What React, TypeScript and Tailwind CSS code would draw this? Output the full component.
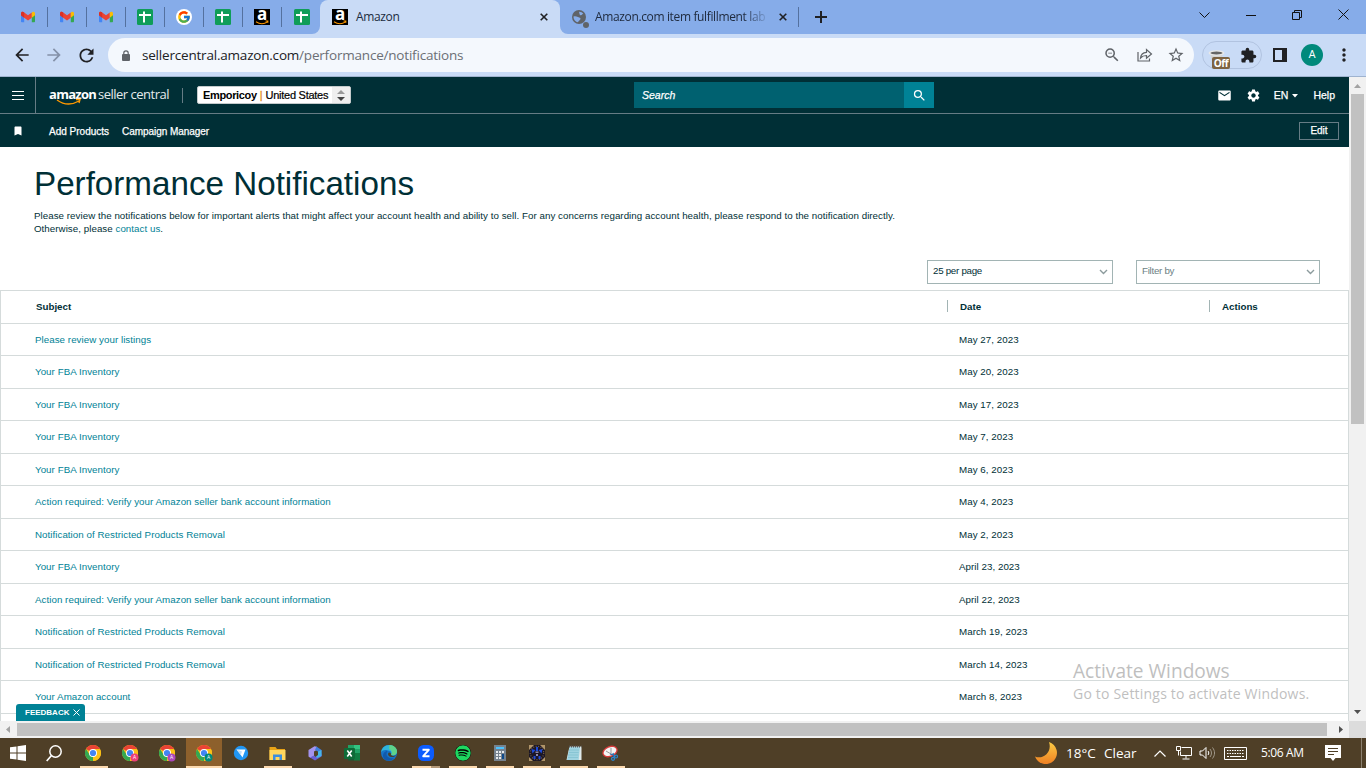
import { ReactNode } from 'react';
import { FcGoogle } from 'react-icons/fc';
import { FaSpotify } from 'react-icons/fa';
import {
  MdArrowBack,
  MdArrowForward,
  MdBookmark,
  MdEmail,
  MdExtension,
  MdMoreVert,
  MdOutlineZoomOut,
  MdRefresh,
  MdSearch,
  MdSettings,
  MdStarBorder,
} from 'react-icons/md';

const notifications = [
  { subject: 'Please review your listings', date: 'May 27, 2023' },
  { subject: 'Your FBA Inventory', date: 'May 20, 2023' },
  { subject: 'Your FBA Inventory', date: 'May 17, 2023' },
  { subject: 'Your FBA Inventory', date: 'May 7, 2023' },
  { subject: 'Your FBA Inventory', date: 'May 6, 2023' },
  { subject: 'Action required: Verify your Amazon seller bank account information', date: 'May 4, 2023' },
  { subject: 'Notification of Restricted Products Removal', date: 'May 2, 2023' },
  { subject: 'Your FBA Inventory', date: 'April 23, 2023' },
  { subject: 'Action required: Verify your Amazon seller bank account information', date: 'April 22, 2023' },
  { subject: 'Notification of Restricted Products Removal', date: 'March 19, 2023' },
  { subject: 'Notification of Restricted Products Removal', date: 'March 14, 2023' },
  { subject: 'Your Amazon account', date: 'March 8, 2023' },
];

function GmailIcon() {
  return (
    <svg width="16" height="16" viewBox="0 0 16 16">
      <path d="M1 5v7.2c0 .6.4 1 1 1h2.2V6.5z" fill="#4285f4" />
      <path d="M15 5v7.2c0 .6-.4 1-1 1h-2.2V6.5z" fill="#34a853" />
      <path d="M1 4.4c0-1.7 1.8-2.1 3.2-1L8 6.3l3.8-2.9v5.3L8 11.4 4.2 8.7 1 6.2z" fill="#ea4335" />
      <path d="M11.8 3.4C13.2 2.3 15 2.8 15 4.4v1.8l-3.2 2.5z" fill="#fbbc04" />
      <path d="M1 4.4c0-1.7 1.8-2.1 3.2-1v5.3L1 6.2z" fill="#d93025" />
    </svg>
  );
}

function SheetsIcon() {
  return (
    <svg width="16" height="16" viewBox="0 0 16 16">
      <rect width="16" height="16" rx="1.5" fill="#0f9d58" />
      <path d="M2 6h12M7 2.500v11" stroke="#fff" strokeWidth="2" />
    </svg>
  );
}

function AmazonIcon() {
  return (
    <span className="relative flex h-4 w-4 justify-center bg-black font-['Open_Sans',sans-serif] text-[17px] leading-[9px] font-bold text-white">
      a
      <svg className="absolute inset-0" width="16" height="16" viewBox="0 0 16 16">
        <path d="M2 12.700c3.500 2.400 8 2.500 11.500.2M11.500 12h2.300v1.800" stroke="#f90" strokeWidth="1.100" fill="none" />
      </svg>
    </span>
  );
}

function GoogleIcon() {
  return (
    <span className="flex h-4 w-4 items-center justify-center rounded-full bg-white">
      <FcGoogle size={14} />
    </span>
  );
}

function GlobeIcon() {
  return (
    <svg width="14" height="14" viewBox="0 0 14 14">
      <circle cx="7" cy="7" r="7" fill="#5f6368" />
      <path d="M7 1.700c2 0 3.500.8 4.300 2-1 .3-1.300 1.300-2.500 1.500S7.500 3.500 7 1.700z" fill="#86ace9" />
      <path d="M1.500 6.500c1.500-.5 3-.2 4.500.5s2.800.7 2.500 2-2 1.500-2.500 3.300C3.500 12 1.500 9.500 1.500 6.500z" fill="#86ace9" />
    </svg>
  );
}

function CloseIcon() {
  return (
    <svg width="8" height="8" viewBox="0 0 8 8">
      <path d="M.7.7l6.600 6.600M7.300.7.7 7.300" stroke="#202124" strokeWidth="1.600" />
    </svg>
  );
}

function TabStrip() {
  const pinned = [GmailIcon, GmailIcon, GmailIcon, SheetsIcon, GoogleIcon, SheetsIcon, AmazonIcon, SheetsIcon];
  return (
    <div className="flex h-[34px] bg-[#86ace9] font-['Open_Sans','Noto_Sans',sans-serif] text-xs tracking-[-0.36px] text-[#202c40]">
      <div className="flex h-full w-[312px] items-center pl-[9px]">
        {pinned.map((Icon, i) => (
          <div
            key={i}
            className={`flex h-5 w-[39px] shrink-0 items-center justify-center ${i < 7 ? 'border-r border-[#54719f]' : ''}`}
          >
            <Icon />
          </div>
        ))}
      </div>
      <svg className="shrink-0 self-end" width="8" height="8" viewBox="0 0 8 8">
        <path d="M8 0v8H0a8 8 0 0 0 8-8z" fill="#c9dbf6" />
      </svg>
      <div className="flex w-60 shrink-0 items-center rounded-t-lg bg-[#c9dbf6] pl-3">
        <AmazonIcon />
        <span className="ml-2 w-[184px]">Amazon</span>
        <CloseIcon />
      </div>
      <svg className="shrink-0 self-end" width="8" height="8" viewBox="0 0 8 8">
        <path d="M0 0v8h8a8 8 0 0 1-8-8z" fill="#c9dbf6" />
      </svg>
      <div className="flex h-full w-[231px] shrink-0 items-center">
        <div className="relative ml-1 h-4 w-[17px] pt-px">
          <GlobeIcon />
          <span className="absolute right-0 -bottom-[3px] h-1.5 w-1.5 rounded-full bg-[#5f6368]" />
        </div>
        <span className="ml-[6px] w-[171px] whitespace-nowrap [mask-image:linear-gradient(to_right,#000_87%,transparent_102%)]">
          Amazon.com item fulfillment lab
        </span>
        <span className="ml-[13px]">
          <CloseIcon />
        </span>
      </div>
      <div className="flex items-center">
        <span className="-ml-px h-5 w-px bg-[#54719f]" />
        <svg className="ml-4" width="12" height="12" viewBox="0 0 12 12">
          <path d="M6 0v12M0 6h12" stroke="#202124" strokeWidth="2" />
        </svg>
      </div>
      <div className="ml-auto flex h-[29px] items-center gap-[36px] pr-[17px]">
        <svg width="11" height="6" viewBox="0 0 11 6">
          <path d="M.5.5l5 5 5-5" stroke="#111" fill="none" />
        </svg>
        <svg width="10" height="10" viewBox="0 0 10 10">
          <path d="M0 5.500h10" stroke="#111" />
        </svg>
        <svg width="10" height="10" viewBox="0 0 10 10">
          <path d="M.5 2.500h7v7h-7zM2.500 2.500v-2h7v7h-2" stroke="#111" fill="none" />
        </svg>
        <svg width="11" height="11" viewBox="0 0 11 11">
          <path d="M.5.5l10 10M10.500.5l-10 10" stroke="#111" />
        </svg>
      </div>
    </div>
  );
}

function LockIcon() {
  return (
    <svg width="8" height="11" viewBox="0 0 8 11">
      <rect y="4" width="8" height="7" rx="1" fill="#5f6368" />
      <path d="M1.800 4.500V3a2.200 2.200 0 0 1 4.400 0v1.500" stroke="#5f6368" strokeWidth="1.200" fill="none" />
    </svg>
  );
}

function ShareIcon() {
  return (
    <svg width="16" height="14" viewBox="0 0 16 14" fill="none" stroke="#5f6368" strokeWidth="1.200">
      <path d="M1 4v9h11.500v-2.500" />
      <path d="M3.500 10c.3-3.500 2.300-5.500 6-5.700V1.500L14.500 6l-5 4.300V7.500C7 7.500 5 8.200 3.500 10z" />
    </svg>
  );
}

function Toolbar() {
  return (
    <div className="flex h-[43px] items-center border-b border-[#9fb3cf] bg-[#c9dbf6] pl-3 text-[#202124]">
      <MdArrowBack size={20} />
      <MdArrowForward size={20} className="ml-3 text-[#8491a8]" />
      <MdRefresh size={21} className="ml-[12px]" />
      <div className="ml-[11px] flex h-[34px] w-[1086px] shrink-0 items-center rounded-full bg-[#f4f8fd] pl-[14px] text-[#5f6368]">
        <LockIcon />
        <span className="ml-3 w-[961px] font-['Open_Sans','Noto_Sans',sans-serif] text-[13.5px] tracking-[-0.2px] text-[#6b6f75]">
          <span className="text-[#202124]">sellercentral.amazon.com</span>/performance/notifications
        </span>
        <MdOutlineZoomOut size={18} className="shrink-0" />
        <span className="ml-4 shrink-0">
          <ShareIcon />
        </span>
        <MdStarBorder size={18} className="ml-[14px] shrink-0" />
      </div>
      <div className="ml-2 flex h-7 w-[60px] shrink-0 items-center rounded-full border border-[#b1c3e0] pl-[5px]">
        <div className="relative h-4 w-[23px] pt-[3px]">
          <svg width="17" height="14" viewBox="0 0 17 14">
            <path d="M2 3h13l-2 9H4z" fill="#d5d5d5" />
            <ellipse cx="8.500" cy="3" rx="8" ry="2.800" fill="#e8e8e8" />
            <ellipse cx="8.500" cy="3" rx="6" ry="1.500" fill="#666" />
          </svg>
          <span className="absolute top-[10px] left-[4px] flex h-3 w-[18px] items-center justify-center rounded-[2px] bg-[#7d6342] font-['Open_Sans',sans-serif] text-[10px] font-bold tracking-[-0.4px] text-white">
            Off
          </span>
        </div>
        <MdExtension size={17} className="ml-[9px]" />
      </div>
      <svg className="ml-[11px] shrink-0" width="14" height="14" viewBox="0 0 14 14">
        <path d="M1 1h12v12H1z" stroke="#202124" strokeWidth="2" fill="none" />
        <path d="M9 0h5v14H9z" fill="#202124" />
      </svg>
      <span className="ml-[14px] flex h-[22px] w-[22px] shrink-0 items-center justify-center rounded-full bg-[#00897b] font-['Roboto',sans-serif] text-[11px] text-white">
        A
      </span>
      <MdMoreVert size={20} className="ml-[11px] shrink-0" />
    </div>
  );
}

function SellerHeader() {
  return (
    <header className="bg-[#002f36] text-white">
      <div className="flex h-[37px] items-center border-b border-[#667c85]">
        <div className="flex h-full w-9 items-center border-r border-[#667c85] pl-3">
          <svg width="12" height="9" viewBox="0 0 12 9">
            <path d="M0 .5h12M0 4.500h12M0 8.500h12" stroke="#fff" />
          </svg>
        </div>
        <div className="relative ml-[13px] h-6 w-[121px] font-['Open_Sans',sans-serif] text-[13px] leading-[23px] whitespace-nowrap">
          <span className="inline-block w-[49px] font-bold tracking-[-0.7px]">amazon</span>
          <span className="tracking-[-0.5px] text-[#e5eaeb]">seller central</span>
          <svg className="absolute top-[15px] left-[7px]" width="26" height="8" viewBox="0 0 26 8">
            <path d="M1 2c7 5 15 5 22 1M20 1.500h4l-1 3.500" stroke="#f90" strokeWidth="1.400" fill="none" />
          </svg>
        </div>
        <span className="ml-3 h-[15px] w-px bg-[#667c85]" />
        <div className="ml-[14px] flex h-[18px] w-[154px] items-center rounded-[2px] border border-[#c4cbcc] bg-white pl-[5px] text-[11px] whitespace-nowrap text-black">
          <b className="tracking-[-0.35px]">Emporicoy</b>
          <span className="mx-[3px] text-[#e08a1e] [-webkit-text-stroke:0.3px]">|</span>
          <span className="tracking-[-0.26px] [-webkit-text-stroke:0.2px]">United States</span>
          <span className="ml-auto flex h-full w-[18px] items-center justify-center bg-[#efefef]">
            <svg width="8" height="11" viewBox="0 0 8 11">
              <path d="M4 0l4 4H0z" fill="#999" />
              <path d="M4 11l4-4H0z" fill="#444" />
            </svg>
          </span>
        </div>
        <div className="ml-[283px] flex h-[26px] w-[300px] items-center bg-[#006170] pl-2 text-[10.5px] italic">
          <span className="pt-[2px] [-webkit-text-stroke:0.25px]">Search</span>
          <span className="ml-auto flex h-full w-[30px] items-center justify-center bg-[#008296]">
            <MdSearch size={15} />
          </span>
        </div>
        <div className="ml-auto flex items-center pr-[14px] text-[10.5px] [-webkit-text-stroke:0.25px]">
          <MdEmail size={15} />
          <MdSettings size={15} className="ml-[14px]" />
          <span className="ml-[13px] pt-[2px]">EN</span>
          <svg className="mt-px ml-1" width="6" height="4" viewBox="0 0 6 4">
            <path d="M0 0h6L3 3.500z" fill="#fff" />
          </svg>
          <span className="ml-[15px] pt-[2px]">Help</span>
        </div>
      </div>
      <div className="flex h-[33px] items-center pr-[10px] pl-3 text-[10px] [-webkit-text-stroke:0.25px]">
        <MdBookmark size={12} />
        <span className="ml-[25px] w-[73px] pt-[2px]">Add Products</span>
        <span className="pt-[2px] tracking-[-0.05px]">Campaign Manager</span>
        <span className="ml-auto flex h-[18px] w-10 items-center justify-center border border-[#667c85]">Edit</span>
      </div>
    </header>
  );
}

function Select({ label, className }: { label: string; className: string }) {
  return (
    <div className={`flex h-6 items-center justify-between border border-[#a2b4b4] pr-1 pl-[5px] ${className}`}>
      <span className="pb-[2px] tracking-[-0.28px]">{label}</span>
      <svg width="9" height="6" viewBox="0 0 9 6">
        <path d="M1 1l3.500 3.500L8 1" stroke="#8c9b9d" strokeWidth="1.400" fill="none" />
      </svg>
    </div>
  );
}

function NotificationsPage() {
  return (
    <main className="flex flex-col tracking-[0.045px]">
      <h1 className="mt-[17px] pl-[34px] text-[33.2px] leading-[40px] tracking-normal whitespace-nowrap">
        Performance Notifications
      </h1>
      <p className="mt-[5px] pl-[34px] leading-[13px] tracking-[0.04px] whitespace-nowrap">
        Please review the notifications below for important alerts that might affect your account health and ability to
        sell. For any concerns regarding account health, please respond to the notification directly.
        <br />
        Otherwise, please <a className="text-[#008296]">contact us</a>.
      </p>
      <div className="mt-[25px] flex justify-end gap-[23px] pr-[29px]">
        <Select label="25 per page" className="w-[186px]" />
        <Select label="Filter by" className="w-[184px] text-[#6c7f84]" />
      </div>
      <div className="mt-[6px] border border-[#d5dbdb]">
        <div className="flex h-[31.6px] items-center pl-[35px] font-bold tracking-normal">
          <span className="w-[911px] pt-[1.6px]">Subject</span>
          <span className="mb-px h-3 w-px bg-[#a2b4b4]" />
          <span className="w-[261px] pt-[1.6px] pl-3">Date</span>
          <span className="mb-px h-3 w-px bg-[#a2b4b4]" />
          <span className="pt-[1.6px] pl-3">Actions</span>
        </div>
        {notifications.map((n, i) => (
          <div key={i} className="flex h-[32.5px] shrink-0 items-center border-t border-[#d5dbdb] pt-[1.6px] pl-[34px]">
            <a className="w-[924px] text-[#008296]">{n.subject}</a>
            <span>{n.date}</span>
          </div>
        ))}
        <div className="h-8 border-t border-[#d5dbdb]" />
      </div>
    </main>
  );
}

function ChromeIcon({ badge }: { badge?: string }) {
  return (
    <svg width="17" height="17" viewBox="0 0 17 17">
      <circle cx="8" cy="8" r="8" fill="#fbc116" />
      <path d="M8 8 1.070 4A8 8 0 0 1 14.930 4z" fill="#ea4335" />
      <path d="M8 8 8 16A8 8 0 0 1 1.070 4L4.500 9.500z" fill="#34a853" />
      <path d="M8 4h6.930a8 8 0 0 1-6.930 12l3.500-6z" fill="#fbc116" />
      <circle cx="8" cy="8" r="4" fill="#fff" />
      <circle cx="8" cy="8" r="3.100" fill="#4285f4" />
      {badge && (
        <>
          <circle cx="12.500" cy="12.500" r="4" fill={badge} />
          <text x="12.500" y="14.300" fontSize="5" fill="#fff" textAnchor="middle">
            A
          </text>
        </>
      )}
    </svg>
  );
}

function BirdIcon() {
  return (
    <svg width="16" height="16" viewBox="0 0 16 16">
      <circle cx="8" cy="8" r="7.200" fill="#2196f3" />
      <path d="M3.500 4.500 12.500 4.500 9.500 12.500 7.800 10z" fill="#fff" />
      <path d="M3.500 4.500 9 6.500l-1.200 3.500z" fill="#bfe0fb" />
    </svg>
  );
}

function ExplorerIcon() {
  return (
    <svg width="17" height="15" viewBox="0 0 17 15">
      <path d="M.5 1h6l1.500 2h8v11H.5z" fill="#e8a317" />
      <path d="M.5 4h16v10H.5z" fill="#ffd75e" />
      <path d="M4 14V8.500h9V14h-2.500v-3h-4v3z" fill="#3b8ede" />
    </svg>
  );
}

function OfficeIcon() {
  return (
    <svg width="14" height="15" viewBox="0 0 14 15">
      <path d="M6.500.3 9 .8v3L6 5.500V10L2.500 12 .5 10.500V4z" fill="#a493ee" />
      <path d="M8.500.5 13.500 4v6L10 8.500V5.500L7 4z" fill="#3f7fe0" />
      <path d="M13.500 7.500v3L7 14.500 2 11.500 6 9.500l2 1.500 3-2z" fill="#6a5fd6" />
      <path d="M10 5.500 13.500 4v6L9 12l-1-1.500 2-1.500z" fill="#45b6ea" />
    </svg>
  );
}

function ExcelIcon() {
  return (
    <svg width="16" height="16" viewBox="0 0 16 16">
      <path d="M4 0h6v8H4z" fill="#21a366" />
      <path d="M10 0h6v4h-6z" fill="#33c481" />
      <path d="M10 4h6v4h-6z" fill="#21a366" />
      <path d="M4 8h6v7.500H4z" fill="#185c37" />
      <path d="M10 8h6v7.500h-6z" fill="#107c41" />
      <rect y="3" width="11" height="11" rx="1" fill="#0f6b38" />
      <path d="M3.300 5.500l4.400 6M7.700 5.500l-4.400 6" stroke="#fff" strokeWidth="1.600" />
    </svg>
  );
}

function EdgeIcon() {
  return (
    <svg width="16" height="16" viewBox="0 0 16 16">
      <circle cx="8" cy="8" r="8" fill="#1673c8" />
      <path d="M0 7.500C.5 3 4 0 8 0s8 3 8 6.500S12 11 10 10c1-1.500.5-4.500-3-4.500C4 4.500 1.500 5 0 7.500z" fill="#2fb5dc" />
      <path d="M8.500 0c4.500.2 7.500 3 7.500 6.500S12 11 10 10c1.500-2 1-5-2-6z" fill="#5fd38a" />
      <path d="M5.500 9c0 3 3.500 5 7.500 4-3 3.500-8 3.500-10.500 0C1 10 3 6 6.500 6 5.800 7 5.500 8 5.500 9z" fill="#1259ab" />
      <path d="M8 7.500c1.500 0 2.500 1 2 2.500 1.500 1.500 3.800 1 5 .3-1 2-5.500 2.700-7.500.2C6.800 9.500 7 8 8 7.500z" fill="#4c4029" />
    </svg>
  );
}

function ZoomIcon() {
  return (
    <svg width="16" height="16" viewBox="0 0 16 16">
      <rect width="16" height="16" rx="5.500" fill="#0b5cff" />
      <path d="M4.500 4.800h6.300L5.200 11.200h6.300" stroke="#fff" strokeWidth="1.900" strokeLinejoin="round" fill="none" />
    </svg>
  );
}

function CalculatorIcon() {
  return (
    <svg width="12" height="16" viewBox="0 0 12 16">
      <rect width="12" height="16" fill="#76828e" />
      <rect x="2" y="2" width="8" height="2" fill="#4cc2ff" />
      <path d="M2 7h2M5 7h2M8 7h2M2 10h2M5 10h2M2 13h2M5 13h2" stroke="#e8ebee" strokeWidth="2" />
      <rect x="8" y="9" width="2" height="5" fill="#0f4a8a" />
    </svg>
  );
}

function GameIcon() {
  return (
    <svg width="16" height="16" viewBox="0 0 16 16">
      <rect width="16" height="16" fill="#1b1626" />
      <path d="M0 0h5L0 5zM16 0h-5l5 5zM0 16h4l-4-4zM16 16h-4l4-4z" fill="#b09468" />
      <circle cx="8" cy="8" r="6.700" stroke="#766348" strokeWidth="1.200" strokeDasharray="1 1.500" fill="none" />
      <path d="M2.500 4l4 1-3 3.500zM13.500 4l-4 1 3 3.500zM7 2h2v4H7zM4.500 11h2v3h-2zM9.500 11h2v3h-2z" fill="#1c49d8" />
      <path d="M6.500 6.500h3v1.500h-3zM7 9h2v2H7z" fill="#8c86ad" />
    </svg>
  );
}

function NotepadIcon() {
  return (
    <svg width="16" height="16" viewBox="0 0 16 16">
      <path d="M3.500 1.500h12v13.500H.5z" fill="#dfe9ea" />
      <path d="M3.500 2h10.500l-1.300 13H1z" fill="#9fd3e0" />
      <path d="M3 5h10M2.700 7.500h10M2.300 10h10M2 12.500h10" stroke="#78bccb" strokeWidth=".6" />
      <path d="M3 1.500h12.500" stroke="#555" strokeWidth="2" strokeDasharray="1 1" />
    </svg>
  );
}

function SnipIcon() {
  return (
    <svg width="17" height="16" viewBox="0 0 17 16">
      <ellipse cx="8" cy="6.500" rx="7.300" ry="4.800" transform="rotate(-22 8 6.500)" fill="#f4f4f4" stroke="#d83b3b" strokeWidth="1.300" />
      <path d="M4 6l5 3M9 3v6" stroke="#999" />
      <path d="M8 9l6 2M11 8l1 4" stroke="#2a6fb0" strokeWidth="1.300" />
      <circle cx="14" cy="11.500" r="1.500" fill="none" stroke="#2a86d0" strokeWidth="1.200" />
      <circle cx="11" cy="13.800" r="1.500" fill="none" stroke="#2a86d0" strokeWidth="1.200" />
    </svg>
  );
}

const apps: { icon: ReactNode; state?: 'open' | 'active' | 'multi' }[] = [
  { icon: <ChromeIcon />, state: 'open' },
  { icon: <ChromeIcon badge="#ec407a" /> },
  { icon: <ChromeIcon badge="#ab47bc" /> },
  { icon: <ChromeIcon badge="#00897b" />, state: 'active' },
  { icon: <BirdIcon /> },
  { icon: <ExplorerIcon />, state: 'open' },
  { icon: <OfficeIcon /> },
  { icon: <ExcelIcon /> },
  { icon: <EdgeIcon /> },
  { icon: <ZoomIcon />, state: 'multi' },
  { icon: <FaSpotify size={16} color="#1ed760" className="rounded-full bg-black" />, state: 'open' },
  { icon: <CalculatorIcon />, state: 'open' },
  { icon: <GameIcon />, state: 'open' },
  { icon: <NotepadIcon />, state: 'open' },
  { icon: <SnipIcon />, state: 'open' },
];

function Taskbar() {
  return (
    <div className="flex h-[30px] items-center bg-[#4f3f27] font-['Open_Sans','Noto_Sans',sans-serif] text-white">
      <svg className="ml-[10px]" width="16" height="16" viewBox="0 0 16 16">
        <path d="M0 2.300 6.500 1.400V7.500H0zM7.500 1.200 16 0v7.500H7.500zM0 8.500h6.500v6.100L0 13.700zM7.500 8.500H16V16l-8.500-1.200z" fill="#fff" />
      </svg>
      <svg className="mr-[13px] ml-5" width="16" height="17" viewBox="0 0 16 17">
        <circle cx="9.500" cy="6.500" r="5.700" stroke="#fff" strokeWidth="1.500" fill="none" />
        <path d="M5.500 10.500.7 16" stroke="#fff" strokeWidth="1.600" />
      </svg>
      {apps.map((app, i) => (
        <div
          key={i}
          className={`flex h-full shrink-0 flex-col items-center ${app.state === 'active' ? 'w-9 bg-[#8d602c]' : 'w-[37px]'}`}
        >
          <div className="flex h-7 items-center pt-0.5">{app.icon}</div>
          {app.state === 'open' && <div className="h-0.5 w-7 bg-[#fcd9ae]" />}
          {app.state === 'active' && <div className="h-0.5 w-full bg-[#fcd9ae]" />}
          {app.state === 'multi' && <div className="h-0.5 w-7 border-r-[9px] border-[#b3997a] bg-[#fcd9ae]" />}
        </div>
      ))}
      <div className="ml-auto flex h-full items-center">
        <svg width="23" height="22" viewBox="0 0 23 22">
          <defs>
            <linearGradient id="moon" x1="0" y1="0" x2="0" y2="1">
              <stop offset="0" stopColor="#fbcb45" />
              <stop offset="1" stopColor="#ef7f22" />
            </linearGradient>
          </defs>
          <path d="M14 0A11.300 11.300 0 1 1 0 14.500C8 18 17.500 10 14 0z" fill="url(#moon)" />
        </svg>
        <span className="ml-2 w-[38px] text-[13.5px] whitespace-nowrap">18°C</span>
        <span className="w-[50px] text-[13.5px]">Clear</span>
        <svg width="12" height="7" viewBox="0 0 12 7">
          <path d="M.5 6.500 6 1l5.500 5.500" stroke="#fff" strokeWidth="1.200" fill="none" />
        </svg>
        <svg className="ml-[10px]" width="16" height="14" viewBox="0 0 16 14" fill="none" stroke="#fff">
          <path d="M5.500 1.500h10v8h-11v-4M10 9.500v3M6.500 13h7M.5.5h4v4h-4zM2.500 4.500v5" />
        </svg>
        <svg className="ml-[7px]" width="17" height="14" viewBox="0 0 17 14" fill="none" stroke="#fff">
          <path d="M1 5h2.500L7 1.500v11L3.500 9H1zM9 5c1 1.200 1 2.800 0 4" />
          <path d="M11 3c2 2.500 2 5.500 0 8M13.500 1.500c2.700 3.500 2.700 7.500 0 11" stroke="#a1988a" />
        </svg>
        <svg className="ml-[8px]" width="23" height="13" viewBox="0 0 23 13" fill="none" stroke="#fff">
          <path d="M.5.5h22v12H.5z" />
          <path d="M3 3.500h17M3 6.500h17" strokeDasharray="1.500 1" />
          <path d="M3 9.500h2M6 9.500h11M18 9.500h2" />
        </svg>
        <span className="ml-[14px] w-[64px] text-xs tracking-[-0.35px] whitespace-nowrap">5:06 AM</span>
        <svg width="16" height="16" viewBox="0 0 16 16">
          <path d="M0 0h16v13h-5.500L8 16l-2.500-3H0z" fill="#fff" />
          <path d="M3 3.500h10M3 6.500h10M3 9.500h6" stroke="#4f3f27" />
        </svg>
        <span className="ml-5 h-full w-px bg-[#8b806f]" />
        <span className="w-1" />
      </div>
    </div>
  );
}

export default function App() {
  return (
    <div className="flex h-[768px] w-[1366px] flex-col overflow-hidden bg-white">
      <TabStrip />
      <Toolbar />
      <div className="flex h-[644px]">
        <div className="relative h-full w-[1349px] overflow-hidden font-['Liberation_Sans',Arial,sans-serif] text-[9.75px] text-[#002f36]">
          <SellerHeader />
          <NotificationsPage />
          <div className="absolute bottom-0 left-4 flex h-[17px] w-[69px] items-center rounded-t-[3px] bg-[#008296] pl-[9px] text-[8px] font-bold text-white">
            FEEDBACK
            <svg className="ml-[4px]" width="7" height="7" viewBox="0 0 7 7">
              <path d="M.5.5l6 6M6.500.5l-6 6" stroke="#fff" />
            </svg>
          </div>
          <div className="absolute top-[582px] left-[1073px] font-['Open_Sans','Noto_Sans',sans-serif] whitespace-nowrap text-[#bfbfbf]">
            <div className="text-[19.1px] leading-6">Activate Windows</div>
            <div className="text-[14px] leading-[22px] tracking-[0.2px]">Go to Settings to activate Windows.</div>
          </div>
        </div>
        <div className="flex w-[17px] flex-col items-center bg-[#f1f1f1]">
          <svg className="my-[7px] shrink-0" width="7" height="4" viewBox="0 0 7 4">
            <path d="M3.500 0 7 4H0z" fill="#a3a3a3" />
          </svg>
          <div className="-mt-px h-[330px] w-[13px] bg-[#c1c1c1]" />
          <svg className="mt-auto mb-[7px]" width="7" height="4" viewBox="0 0 7 4">
            <path d="M0 0h7L3.500 4z" fill="#505050" />
          </svg>
        </div>
      </div>
      <div className="flex h-[17px] items-center bg-[#f1f1f1]">
        <svg className="ml-[6px]" width="4" height="7" viewBox="0 0 4 7">
          <path d="M4 0v7L0 3.500z" fill="#a3a3a3" />
        </svg>
        <div className="ml-[7px] h-[13px] w-[1310px] bg-[#c1c1c1]" />
        <svg className="ml-3" width="4" height="7" viewBox="0 0 4 7">
          <path d="M0 0v7l4-3.500z" fill="#505050" />
        </svg>
        <div className="ml-auto h-full w-[17px] bg-[#dcdcdc]" />
      </div>
      <Taskbar />
    </div>
  );
}
